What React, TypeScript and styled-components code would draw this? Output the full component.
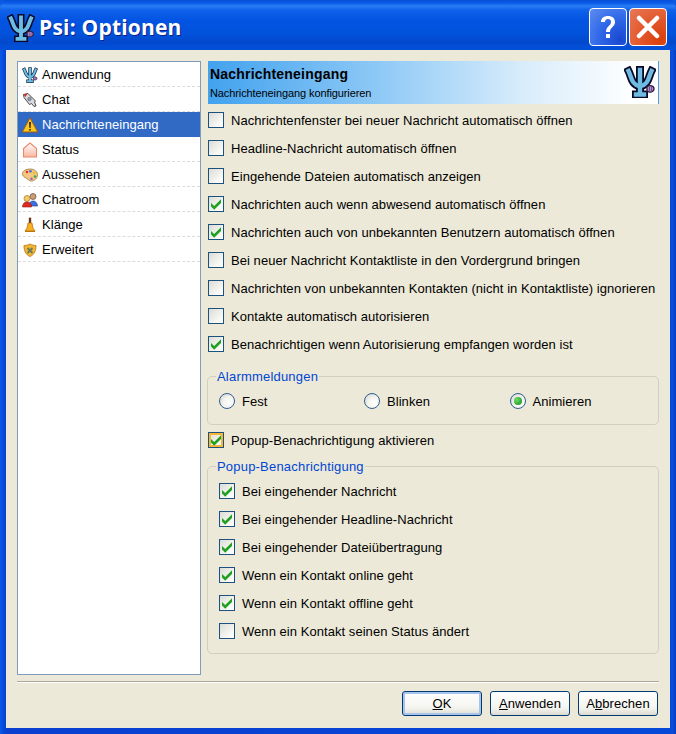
import React from "react";
import styled, { createGlobalStyle } from "styled-components";

const Global = createGlobalStyle`
  html, body { margin: 0; padding: 0; background: #0a5ae0; }
  * { box-sizing: border-box; }
`;

const Win = styled.div`
  width: 676px;
  height: 734px;
  display: flex;
  flex-direction: column;
  background: linear-gradient(90deg, #0a5ae8 0, #0650e0 2px, #0648d8 4px, #0a3fd0 6px, #0648d8 670px, #0650e0 672px, #0a3cc0 676px);
  border-radius: 8px 8px 0 0;
  font-family: "Liberation Sans", Arial, sans-serif;
  font-size: 13px;
  letter-spacing: 0.05px;
  color: #000;
  overflow: hidden;
`;
const TitleBar = styled.div`
  height: 50px;
  flex: none;
  display: flex;
  align-items: center;
  padding: 2px 9px 0 7px;
  background: linear-gradient(180deg, #0550d8 0, #0a5ce8 3px, #2a7df4 6px, #0f62ea 10px, #0354e2 20px, #0252dc 34px, #0248cc 42px, #0350d8 47px, #0350d8 50px);
`;
const Title = styled.div`
  flex: 1;
  margin: 2px 0 0 4px;
  font-family: "Open Sans", sans-serif;
  font-weight: 700;
  font-size: 21px;
  letter-spacing: 0.2px;
  color: #fff;
  text-shadow: 1px 1px 0 #0f1f80;
`;
const TitleIcon = styled.div`
  display: flex;
  margin-top: 3px;
`;
const CapBtn = styled.div<{ $close?: boolean }>`
  width: 38px;
  height: 38px;
  margin-left: 2px;
  margin-top: 2px;
  border: 1px solid #fff;
  border-radius: 4px;
  display: flex;
  align-items: center;
  justify-content: center;
  background: ${(p) =>
    p.$close
      ? "radial-gradient(circle at 85% 85%, #d8400a 0, #e2562a 45%, #e87a58 100%)"
      : "radial-gradient(circle at 85% 85%, #1a48d0 0, #2f68e8 50%, #5f8cf0 100%)"};
`;
const Client = styled.div`
  flex: 1;
  margin: 0 6px 6px;
  background: #ece9d8;
  padding: 11px 11px 12px;
  display: flex;
  flex-direction: column;
`;
const Main = styled.div`
  height: 614px;
  display: flex;
  gap: 6px;
`;
const List = styled.div`
  width: 184px;
  flex: none;
  background: #fff;
  border: 1px solid #7f9db9;
`;
const Item = styled.div<{ $sel?: boolean }>`
  height: 25px;
  display: flex;
  align-items: center;
  padding: 1px 0 0 4px;
  gap: 4px;
  background: ${(p) => (p.$sel ? "#316ac5" : "#fff")};
  color: ${(p) => (p.$sel ? "#fff" : "#000")};
  border-bottom: 1px dashed ${(p) => (p.$sel ? "#316ac5" : "#dcdcdc")};
`;
const Right = styled.div`
  flex: 1;
  min-width: 0;
  display: flex;
  flex-direction: column;
`;
const Banner = styled.div`
  height: 43px;
  flex: none;
  margin-left: 1px;
  margin-bottom: 2px;
  padding: 5px 2px 0 2px;
  position: relative;
  background: linear-gradient(90deg, #42a2ee 0, #8ec9f6 38%, #d8ecfb 70%, #ffffff 95%);
  border-right: 1px solid #4a9fe0;
`;
const BannerTitle = styled.div`
  font-weight: 700;
  font-size: 14px;
  letter-spacing: 0.2px;
  line-height: 17px;
`;
const BannerSub = styled.div`
  font-size: 11px;
  letter-spacing: -0.1px;
  line-height: 14px;
  margin-top: 3px;
`;
const BannerIcon = styled.div`
  position: absolute;
  right: 2px;
  top: 5px;
`;
const Row = styled.label`
  height: 28px;
  flex: none;
  display: flex;
  align-items: center;
  gap: 7px;
`;
const OptRow = styled(Row)`
  padding-left: 1px;
`;
const PopupMaster = styled(OptRow)`
  margin-top: 1px;
`;
const Box = styled.span<{ $hot?: boolean }>`
  width: 16px;
  height: 16px;
  flex: none;
  display: flex;
  align-items: center;
  justify-content: center;
  border: 1px solid #1c5180;
  background: linear-gradient(135deg, #dcdcd7 0, #f4f4ef 60%, #ffffff 100%);
  box-shadow: ${(p) => (p.$hot ? "inset 0 0 0 2px #f8b636" : "none")};
`;
const Radio = styled.span`
  width: 16px;
  height: 16px;
  flex: none;
  border-radius: 50%;
  border: 1px solid #2f5f92;
  display: flex;
  align-items: center;
  justify-content: center;
  background: radial-gradient(circle at 65% 65%, #ffffff 0, #f4f4ef 45%, #d0d0c8 100%);
`;
const Dot = styled.span`
  width: 8px;
  height: 8px;
  border-radius: 50%;
  background: radial-gradient(circle at 35% 35%, #6fdc6f, #21a121 75%);
`;
const Group = styled.fieldset<{ $h: number }>`
  margin: 0;
  padding: 0 11px;
  height: ${(p) => p.$h}px;
  border: 1px solid #d0d0bf;
  border-radius: 5px;
  flex: none;
`;
const AlarmGroup = styled(Group)`
  margin-top: 11px;
`;
const PopupGroup = styled(Group)`
  margin-top: 5px;
  padding-top: 3px;
`;
const Legend = styled.legend`
  padding: 0 1px;
  margin-left: -3px;
  color: #0046d5;
  font-size: 13px;
  letter-spacing: 0.2px;
  line-height: 15px;
`;
const RadioGrid = styled.div`
  display: grid;
  grid-template-columns: 145px 145.5px 1fr;
  margin-top: 7px;
`;
const RadioCell = styled.div`
  display: flex;
  align-items: center;
  gap: 7px;
  height: 20px;
`;
const Sep = styled.div`
  height: 2px;
  flex: none;
  margin-top: 6px;
  background: linear-gradient(180deg, #aca899 1px, #fff 1px);
`;
const Buttons = styled.div`
  margin-top: 8px;
  display: flex;
  justify-content: flex-end;
  gap: 8px;
  padding-right: 1px;
`;
const Btn = styled.button<{ $def?: boolean }>`
  width: 80px;
  height: 25px;
  padding: 0;
  font: inherit;
  letter-spacing: inherit;
  color: #000;
  border: 1px solid #003c74;
  border-radius: 3px;
  background: linear-gradient(180deg, #ffffff 0, #f4f4ef 70%, #dcdad0 100%);
  box-shadow: ${(p) => (p.$def ? "inset 0 0 0 2px #a8c4ec" : "none")};
  u { text-underline-offset: 1px; }
`;

const PsiIcon = ({ s = 16 }: { s?: number }) => {
  const small = s < 20;
  const arms = "M4.500 5 C8 12 7 18 16 20.500 C25 18 24 12 27.500 5 M16 4 V28 M12 28.500 H20";
  return (
    <svg width={s} height={s} viewBox="0 0 32 32" style={{ flex: "none" }}>
      <path d={arms} fill="none" stroke={small ? "#17344e" : "#0a0a28"} strokeWidth={small ? 7 : 8} strokeLinecap="square" strokeLinejoin="round" />
      <path d={arms} fill="none" stroke="#6fbce2" strokeWidth={small ? 4 : 4.400} strokeLinecap="square" strokeLinejoin="round" />
      <path d="M23 20.500c3-1.500 7-.8 7 2.300s-4 4-7 2.500z" fill="#b98ac9" stroke="#2a1a3a" strokeWidth="1.300" />
      <path d="M25.500 21v5M27.500 21v5" stroke="#6a4a80" strokeWidth=".9" />
    </svg>
  );
};
const Rocket = () => (
  <svg width="16" height="16" viewBox="0 0 16 16" style={{ flex: "none" }}>
    <path d="M1.500 2.500 6 1.500l7.500 7.500-1 1 1.500 4-2 .5-2.500-3-2 1-5.500-7z" fill="#d9dadf" stroke="#3a3a3a" strokeWidth=".9" strokeLinejoin="round" />
    <path d="M1.500 2.500 5.500 1.500 3.500 5z" fill="#d62a1e" />
    <circle cx="7.500" cy="7" r="1.800" fill="#8a9aae" stroke="#555" strokeWidth=".5" />
  </svg>
);
const Warn = () => (
  <svg width="16" height="16" viewBox="0 0 16 16" style={{ flex: "none" }}>
    <path d="M8 .8 15.700 15H.3z" fill="#f8c820" stroke="#a85a10" strokeLinejoin="round" />
    <path d="M7 5h2l-.4 6H7.400z" fill="#402800" />
    <rect x="7.200" y="12" width="1.600" height="1.600" fill="#402800" />
  </svg>
);
const House = () => (
  <svg width="16" height="16" viewBox="0 0 16 16" style={{ flex: "none" }}>
    <defs>
      <linearGradient id="hg" x1="0" y1="0" x2="0" y2="1">
        <stop offset="0" stopColor="#fff" />
        <stop offset="1" stopColor="#fbb6a0" />
      </linearGradient>
    </defs>
    <path d="M8 1 14.500 6.500V15h-13V6.500z" fill="url(#hg)" stroke="#e88a68" strokeWidth="1.100" />
  </svg>
);
const Palette = () => (
  <svg width="16" height="16" viewBox="0 0 16 16" style={{ flex: "none" }}>
    <path d="M8 2c4.500 0 7.500 2.500 7.500 6S12 14 9.500 14 6 12 4 11 .5 9 .5 6.500 4 2 8 2z" fill="#f4c880" stroke="#a07838" strokeWidth=".8" />
    <circle cx="5" cy="5" r="1.300" fill="#e83030" />
    <circle cx="8.500" cy="4.300" r="1.300" fill="#3a70e0" />
    <circle cx="12" cy="6" r="1.300" fill="#e8c020" />
    <circle cx="13" cy="9.500" r="1.300" fill="#30b040" />
    <circle cx="9.500" cy="11.800" r="1.300" fill="#a060d0" />
  </svg>
);
const People = () => (
  <svg width="16" height="16" viewBox="0 0 16 16" style={{ flex: "none" }}>
    <circle cx="11" cy="4.500" r="3" fill="#c8a078" stroke="#6a4a30" strokeWidth=".7" />
    <path d="M7 14c0-3 1.500-5 4-5s4.500 2 4.500 5z" fill="#3a70e0" stroke="#203a90" strokeWidth=".6" />
    <circle cx="5" cy="6.500" r="3" fill="#f6c868" stroke="#a07a30" strokeWidth=".7" />
    <path d="M.5 15c0-3 1.500-5 4.500-5s4.500 2 4.500 5z" fill="#e02a20" stroke="#901a10" strokeWidth=".6" />
  </svg>
);
const Bell = () => (
  <svg width="16" height="16" viewBox="0 0 16 16" style={{ flex: "none" }}>
    <rect x="6.800" y="0.500" width="2.400" height="6" rx="1" fill="#6a3a18" />
    <path d="M6 6h4l1 5 2 3H3l2-3z" fill="#f8b020" stroke="#b06a10" strokeWidth=".7" />
    <path d="M3 14h10v1H3z" fill="#b87810" />
  </svg>
);
const Shield = () => (
  <svg width="16" height="16" viewBox="0 0 16 16" style={{ flex: "none" }}>
    <path d="M8 2c2 1 4 1.500 6 1.500 0 5-1.500 9-6 11-4.500-2-6-6-6-11C4 3.500 6 3 8 2z" fill="#f0b830" stroke="#c07a20" strokeWidth=".9" />
    <path d="M5.500 6 10.500 11M10.500 6 5.500 11" stroke="#6a7a5a" strokeWidth="1.800" />
  </svg>
);
const Check = () => (
  <svg width="12" height="12" viewBox="0 0 12 12">
    <path d="M1 5 4.200 8 11 1.200V5L4.200 11.800 1 8.600z" fill="#21a121" />
  </svg>
);

const nav: [React.ReactNode, string][] = [
  [<PsiIcon />, "Anwendung"],
  [<Rocket />, "Chat"],
  [<Warn />, "Nachrichteneingang"],
  [<House />, "Status"],
  [<Palette />, "Aussehen"],
  [<People />, "Chatroom"],
  [<Bell />, "Klänge"],
  [<Shield />, "Erweitert"],
];
const opts: [string, boolean][] = [
  ["Nachrichtenfenster bei neuer Nachricht automatisch öffnen", false],
  ["Headline-Nachricht automatisch öffnen", false],
  ["Eingehende Dateien automatisch anzeigen", false],
  ["Nachrichten auch wenn abwesend automatisch öffnen", true],
  ["Nachrichten auch von unbekannten Benutzern automatisch öffnen", true],
  ["Bei neuer Nachricht Kontaktliste in den Vordergrund bringen", false],
  ["Nachrichten von unbekannten Kontakten (nicht in Kontaktliste) ignorieren", false],
  ["Kontakte automatisch autorisieren", false],
  ["Benachrichtigen wenn Autorisierung empfangen worden ist", true],
];
const popups: [string, boolean][] = [
  ["Bei eingehender Nachricht", true],
  ["Bei eingehender Headline-Nachricht", true],
  ["Bei eingehender Dateiübertragung", true],
  ["Wenn ein Kontakt online geht", true],
  ["Wenn ein Kontakt offline geht", true],
  ["Wenn ein Kontakt seinen Status ändert", false],
];

export default function App() {
  return (
    <>
      <Global />
      <Win>
        <TitleBar>
          <TitleIcon>
            <PsiIcon s={28} />
          </TitleIcon>
          <Title>Psi: Optionen</Title>
          <CapBtn>
            <svg width="24" height="28" viewBox="0 0 24 28">
              <path d="M5 9c0-4 3-6 7-6s7 2 7 6c0 5-5 5-5 10h-4c0-6 5-6 5-10 0-2-1-3-3-3s-3 1-3 3z" fill="#fff" />
              <rect x="10" y="21" width="4" height="4" fill="#fff" />
            </svg>
          </CapBtn>
          <CapBtn $close>
            <svg width="24" height="24" viewBox="0 0 24 24">
              <path d="M3 3l18 18M21 3 3 21" stroke="#fff" strokeWidth="4.500" strokeLinecap="round" />
            </svg>
          </CapBtn>
        </TitleBar>
        <Client>
          <Main>
            <List>
              {nav.map(([ic, t], i) => (
                <Item key={t} $sel={i === 2}>
                  {ic}
                  {t}
                </Item>
              ))}
            </List>
            <Right>
              <Banner>
                <BannerTitle>Nachrichteneingang</BannerTitle>
                <BannerSub>Nachrichteneingang konfigurieren</BannerSub>
                <BannerIcon>
                  <PsiIcon s={32} />
                </BannerIcon>
              </Banner>
              {opts.map(([t, on]) => (
                <OptRow key={t}>
                  <Box>{on && <Check />}</Box>
                  {t}
                </OptRow>
              ))}
              <AlarmGroup $h={56}>
                <Legend>Alarmmeldungen</Legend>
                <RadioGrid>
                  <RadioCell><Radio />Fest</RadioCell>
                  <RadioCell><Radio />Blinken</RadioCell>
                  <RadioCell><Radio><Dot /></Radio>Animieren</RadioCell>
                </RadioGrid>
              </AlarmGroup>
              <PopupMaster>
                <Box $hot><Check /></Box>
                Popup-Benachrichtigung aktivieren
              </PopupMaster>
              <PopupGroup $h={195}>
                <Legend>Popup-Benachrichtigung</Legend>
                {popups.map(([t, on]) => (
                  <Row key={t}>
                    <Box>{on && <Check />}</Box>
                    {t}
                  </Row>
                ))}
              </PopupGroup>
            </Right>
          </Main>
          <Sep />
          <Buttons>
            <Btn $def><u>O</u>K</Btn>
            <Btn><u>A</u>nwenden</Btn>
            <Btn>A<u>b</u>brechen</Btn>
          </Buttons>
        </Client>
      </Win>
    </>
  );
}
